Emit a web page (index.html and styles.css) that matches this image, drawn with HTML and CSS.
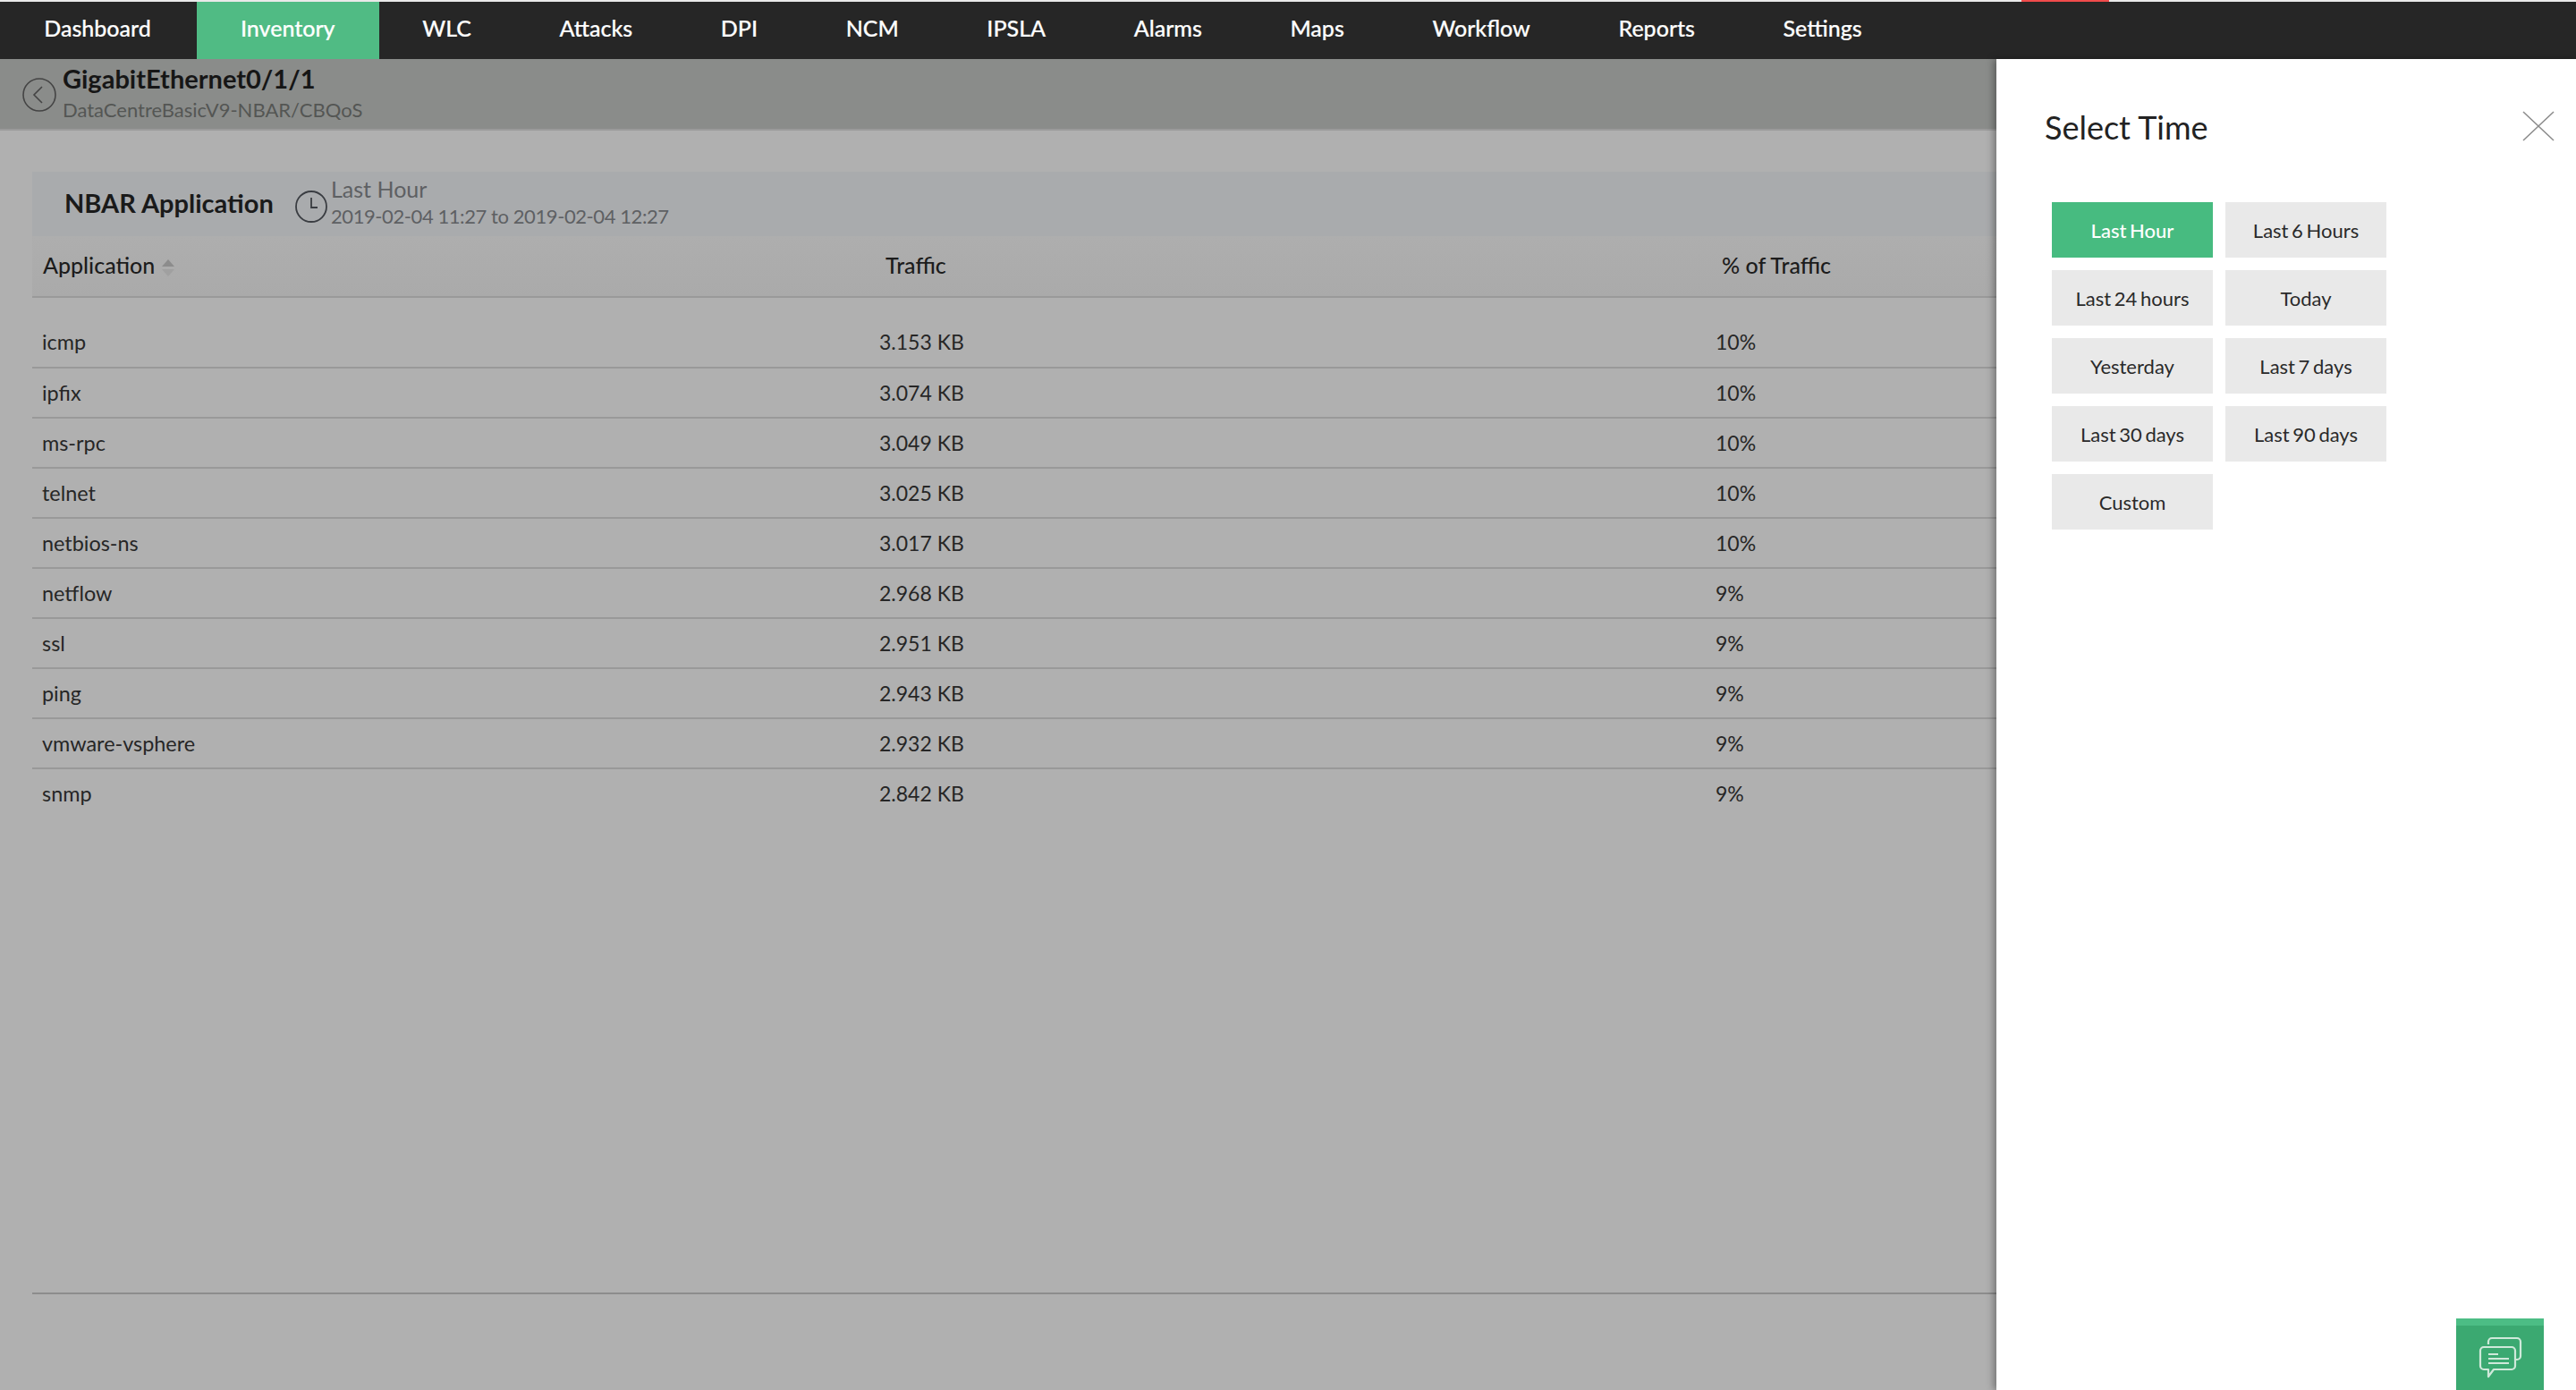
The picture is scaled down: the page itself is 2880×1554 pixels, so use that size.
FILE: index.html
```html
<!DOCTYPE html>
<html lang="en">
<head>
    <meta charset="UTF-8">
    <title>NBAR Application</title>
    <link rel="stylesheet" href="styles.css">
</head>
<body>
    <div class="top-strip"><div class="red-mark"></div></div>
    <nav class="topnav">
        <a class="nav-item">Dashboard</a>
        <a class="nav-item active">Inventory</a>
        <a class="nav-item">WLC</a>
        <a class="nav-item">Attacks</a>
        <a class="nav-item">DPI</a>
        <a class="nav-item">NCM</a>
        <a class="nav-item">IPSLA</a>
        <a class="nav-item">Alarms</a>
        <a class="nav-item">Maps</a>
        <a class="nav-item">Workflow</a>
        <a class="nav-item">Reports</a>
        <a class="nav-item">Settings</a>
    </nav>

    <div class="layout">
        <main class="content">
            <header class="page-head">
                <svg class="back-icon" viewBox="0 0 38 38" fill="none" stroke="#444" stroke-width="1.6">
                    <circle cx="19" cy="19" r="18"></circle>
                    <polyline points="22,10 13,19 22,28"></polyline>
                </svg>
                <div class="page-names">
                    <div class="page-title">GigabitEthernet0/1/1</div>
                    <div class="page-sub">DataCentreBasicV9-NBAR/CBQoS</div>
                </div>
            </header>

            <section class="card">
                <div class="card-head">
                    <h2>NBAR Application</h2>
                    <svg class="clock-icon" viewBox="0 0 36 36" fill="none" stroke="#3a3d42" stroke-width="1.8">
                        <circle cx="18" cy="18" r="17"></circle>
                        <polyline points="18,8 18,19 25,19"></polyline>
                    </svg>
                    <div class="time-info">
                        <div class="time-label">Last Hour</div>
                        <div class="time-range">2019-02-04 11:27 to 2019-02-04 12:27</div>
                    </div>
                </div>

                <table class="data-table">
                    <thead>
                        <tr>
                            <th class="col-app">Application
                                <span class="sort-arrows"><i class="up"></i><i class="down"></i></span>
                            </th>
                            <th class="col-traffic">Traffic</th>
                            <th class="col-pct">% of Traffic</th>
                        </tr>
                    </thead>
                    <tbody>
                        <tr><td>icmp</td><td>3.153 KB</td><td>10%</td></tr>
                        <tr><td>ipfix</td><td>3.074 KB</td><td>10%</td></tr>
                        <tr><td>ms-rpc</td><td>3.049 KB</td><td>10%</td></tr>
                        <tr><td>telnet</td><td>3.025 KB</td><td>10%</td></tr>
                        <tr><td>netbios-ns</td><td>3.017 KB</td><td>10%</td></tr>
                        <tr><td>netflow</td><td>2.968 KB</td><td>9%</td></tr>
                        <tr><td>ssl</td><td>2.951 KB</td><td>9%</td></tr>
                        <tr><td>ping</td><td>2.943 KB</td><td>9%</td></tr>
                        <tr><td>vmware-vsphere</td><td>2.932 KB</td><td>9%</td></tr>
                        <tr><td>snmp</td><td>2.842 KB</td><td>9%</td></tr>
                    </tbody>
                </table>
                <div class="card-foot"></div>
            </section>
        </main>

        <aside class="time-panel">
            <div class="panel-head">
                <h3>Select Time</h3>
                <svg class="close-icon" viewBox="0 0 36 34" fill="none" stroke="#8b8b8b" stroke-width="1.5">
                    <line x1="1" y1="1" x2="35" y2="33"></line>
                    <line x1="35" y1="1" x2="1" y2="33"></line>
                </svg>
            </div>
            <div class="time-grid">
                <button class="time-btn selected">Last Hour</button>
                <button class="time-btn">Last 6 Hours</button>
                <button class="time-btn">Last 24 hours</button>
                <button class="time-btn">Today</button>
                <button class="time-btn">Yesterday</button>
                <button class="time-btn">Last 7 days</button>
                <button class="time-btn">Last 30 days</button>
                <button class="time-btn">Last 90 days</button>
                <button class="time-btn">Custom</button>
            </div>
            <div class="chat-btn">
                <svg viewBox="0 0 50 50" fill="none" stroke="#cfe9da" stroke-width="2.2" stroke-linejoin="round">
                    <path d="M11 10 V7 a4 4 0 0 1 4 -4 H43 a4 4 0 0 1 4 4 V23 a4 4 0 0 1 -4 4 H41"></path>
                    <path d="M6 13 H37 a4 4 0 0 1 4 4 V34 a4 4 0 0 1 -4 4 H17 L11 46 V38 H6 a4 4 0 0 1 -4 -4 V17 a4 4 0 0 1 4 -4 Z"></path>
                    <path d="M11 21 H22 M11 26 H34 M11 31 H34"></path>
                </svg>
            </div>
        </aside>
    </div>
</body>
</html>
```

FILE: styles.css
```css
* {
    margin: 0;
    padding: 0;
    box-sizing: border-box;
}

html {
    height: 100%;
    overflow: hidden;
}

body {
    height: 100%;
    font-family: Lato, "Open Sans", sans-serif;
    background: #b0b0b0;
    color: #1c1c1c;
}

.top-strip {
    height: 2px;
    padding-left: 2260px;
    background: #e9e9e9;
}

.red-mark {
    width: 98px;
    height: 2px;
    background: #f04b4b;
}

.topnav {
    display: flex;
    height: 64px;
    background: #262626;
}

.nav-item {
    display: flex;
    align-items: center;
    padding: 0 49.3px 6px;
    color: #fff;
    font-size: 25px;
    font-weight: 500;
    -webkit-text-stroke: 0.2px #fff;
}

.nav-item.active {
    background: #50bb84;
    margin-left: 1.5px;
    margin-right: -1px;
}

.layout {
    display: flex;
    height: 1488px;
}

.content {
    width: 2232px;
    flex-shrink: 0;
}

.page-head {
    display: flex;
    align-items: center;
    gap: 7px;
    height: 80px;
    padding-left: 25px;
    background: #8a8c8a;
    border-bottom: 2px solid #9a9a9a;
}

.back-icon {
    width: 38px;
    height: 38px;
    margin-top: 2px;
}

.page-names {
    margin-top: -5px;
}

.page-title {
    font-size: 29px;
    font-weight: 700;
    line-height: 36px;
    color: #161616;
}

.page-sub {
    font-size: 22px;
    line-height: 26px;
    margin-top: 4px;
    color: #545654;
}

.card {
    margin: 46px 0 0 36px;
}

.card-head {
    display: flex;
    align-items: center;
    height: 72px;
    padding: 0 0 3px 36px;
    background: #a9abad;
}

.card-head h2 {
    font-size: 29px;
    font-weight: 700;
    color: #1a1a1a;
    width: 258px;
}

.clock-icon {
    width: 36px;
    height: 36px;
    margin: 8px 4px 0 0;
}

.time-info {
    margin-top: -3px;
}

.time-label {
    font-size: 25px;
    line-height: 30px;
    margin-bottom: 3px;
    color: #5e6063;
}

.time-range {
    font-size: 22px;
    line-height: 26px;
    letter-spacing: -0.42px;
    color: #5e6063;
}

.data-table {
    width: 100%;
    border-collapse: collapse;
    table-layout: fixed;
    font-size: 23px;
}

.data-table th {
    height: 68px;
    text-align: left;
    font-weight: 500;
    font-size: 25px;
    color: #1c1c1c;
    background: linear-gradient(#aeaeae, #aaaaaa);
    border-bottom: 2px solid #999;
    padding-bottom: 4px;
}

.col-app {
    width: 946px;
    padding-left: 12px;
}

.col-traffic {
    width: 935px;
    padding-left: 8px;
}

.col-pct {
    padding-left: 8px;
}

.sort-arrows {
    display: inline-block;
    vertical-align: middle;
    margin-left: 1px;
}

.sort-arrows i {
    display: block;
    width: 0;
    height: 0;
    border-left: 7.5px solid transparent;
    border-right: 7.5px solid transparent;
}

.sort-arrows .up {
    border-bottom: 8px solid #8c8c8c;
    margin-bottom: 3px;
}

.sort-arrows .down {
    border-top: 8px solid #a0a0a0;
}

.data-table tbody tr {
    height: 56px;
    border-bottom: 2px solid #999;
}

.data-table tbody tr:first-child td {
    padding-top: 22px;
}

.data-table tbody tr:first-child {
    height: 79px;
}

.data-table tbody tr:last-child {
    border-bottom: none;
}

.data-table td {
    color: #262626;
    padding: 0 0 1px 1px;
}

.data-table td:first-child {
    padding-left: 11px;
    font-size: 23.4px;
}

.card-foot {
    margin-top: 530px;
    border-top: 2px solid #8c8c8c;
}

.time-panel {
    flex: 1;
    position: relative;
    background: #fff;
    box-shadow: -3px 0 8px rgba(0, 0, 0, 0.35);
}

.panel-head {
    display: flex;
    justify-content: space-between;
    align-items: flex-start;
    padding: 54px 24px 0 54px;
    height: 160px;
}

.panel-head h3 {
    font-size: 36px;
    font-weight: 400;
    line-height: 44px;
    color: #222;
}

.close-icon {
    width: 36px;
    height: 34px;
    margin-top: 4px;
}

.time-grid {
    display: grid;
    grid-template-columns: 180px 180px;
    grid-auto-rows: 62px;
    gap: 14px;
    margin-left: 62px;
}

.time-btn {
    border: none;
    background: #e9e9e9;
    color: #2a2a2a;
    font-family: inherit;
    font-size: 22px;
    word-spacing: -2px;
}

.time-btn.selected {
    background: #47bb80;
    color: #fff;
    font-weight: 500;
}

.chat-btn {
    position: absolute;
    right: 36px;
    bottom: 0;
    width: 98px;
    height: 80px;
    display: flex;
    align-items: center;
    justify-content: center;
    background: #3ba971;
    border-top: 8px solid #4cbd85;
}

.chat-btn svg {
    width: 50px;
    height: 50px;
    margin-left: 2px;
}
```
